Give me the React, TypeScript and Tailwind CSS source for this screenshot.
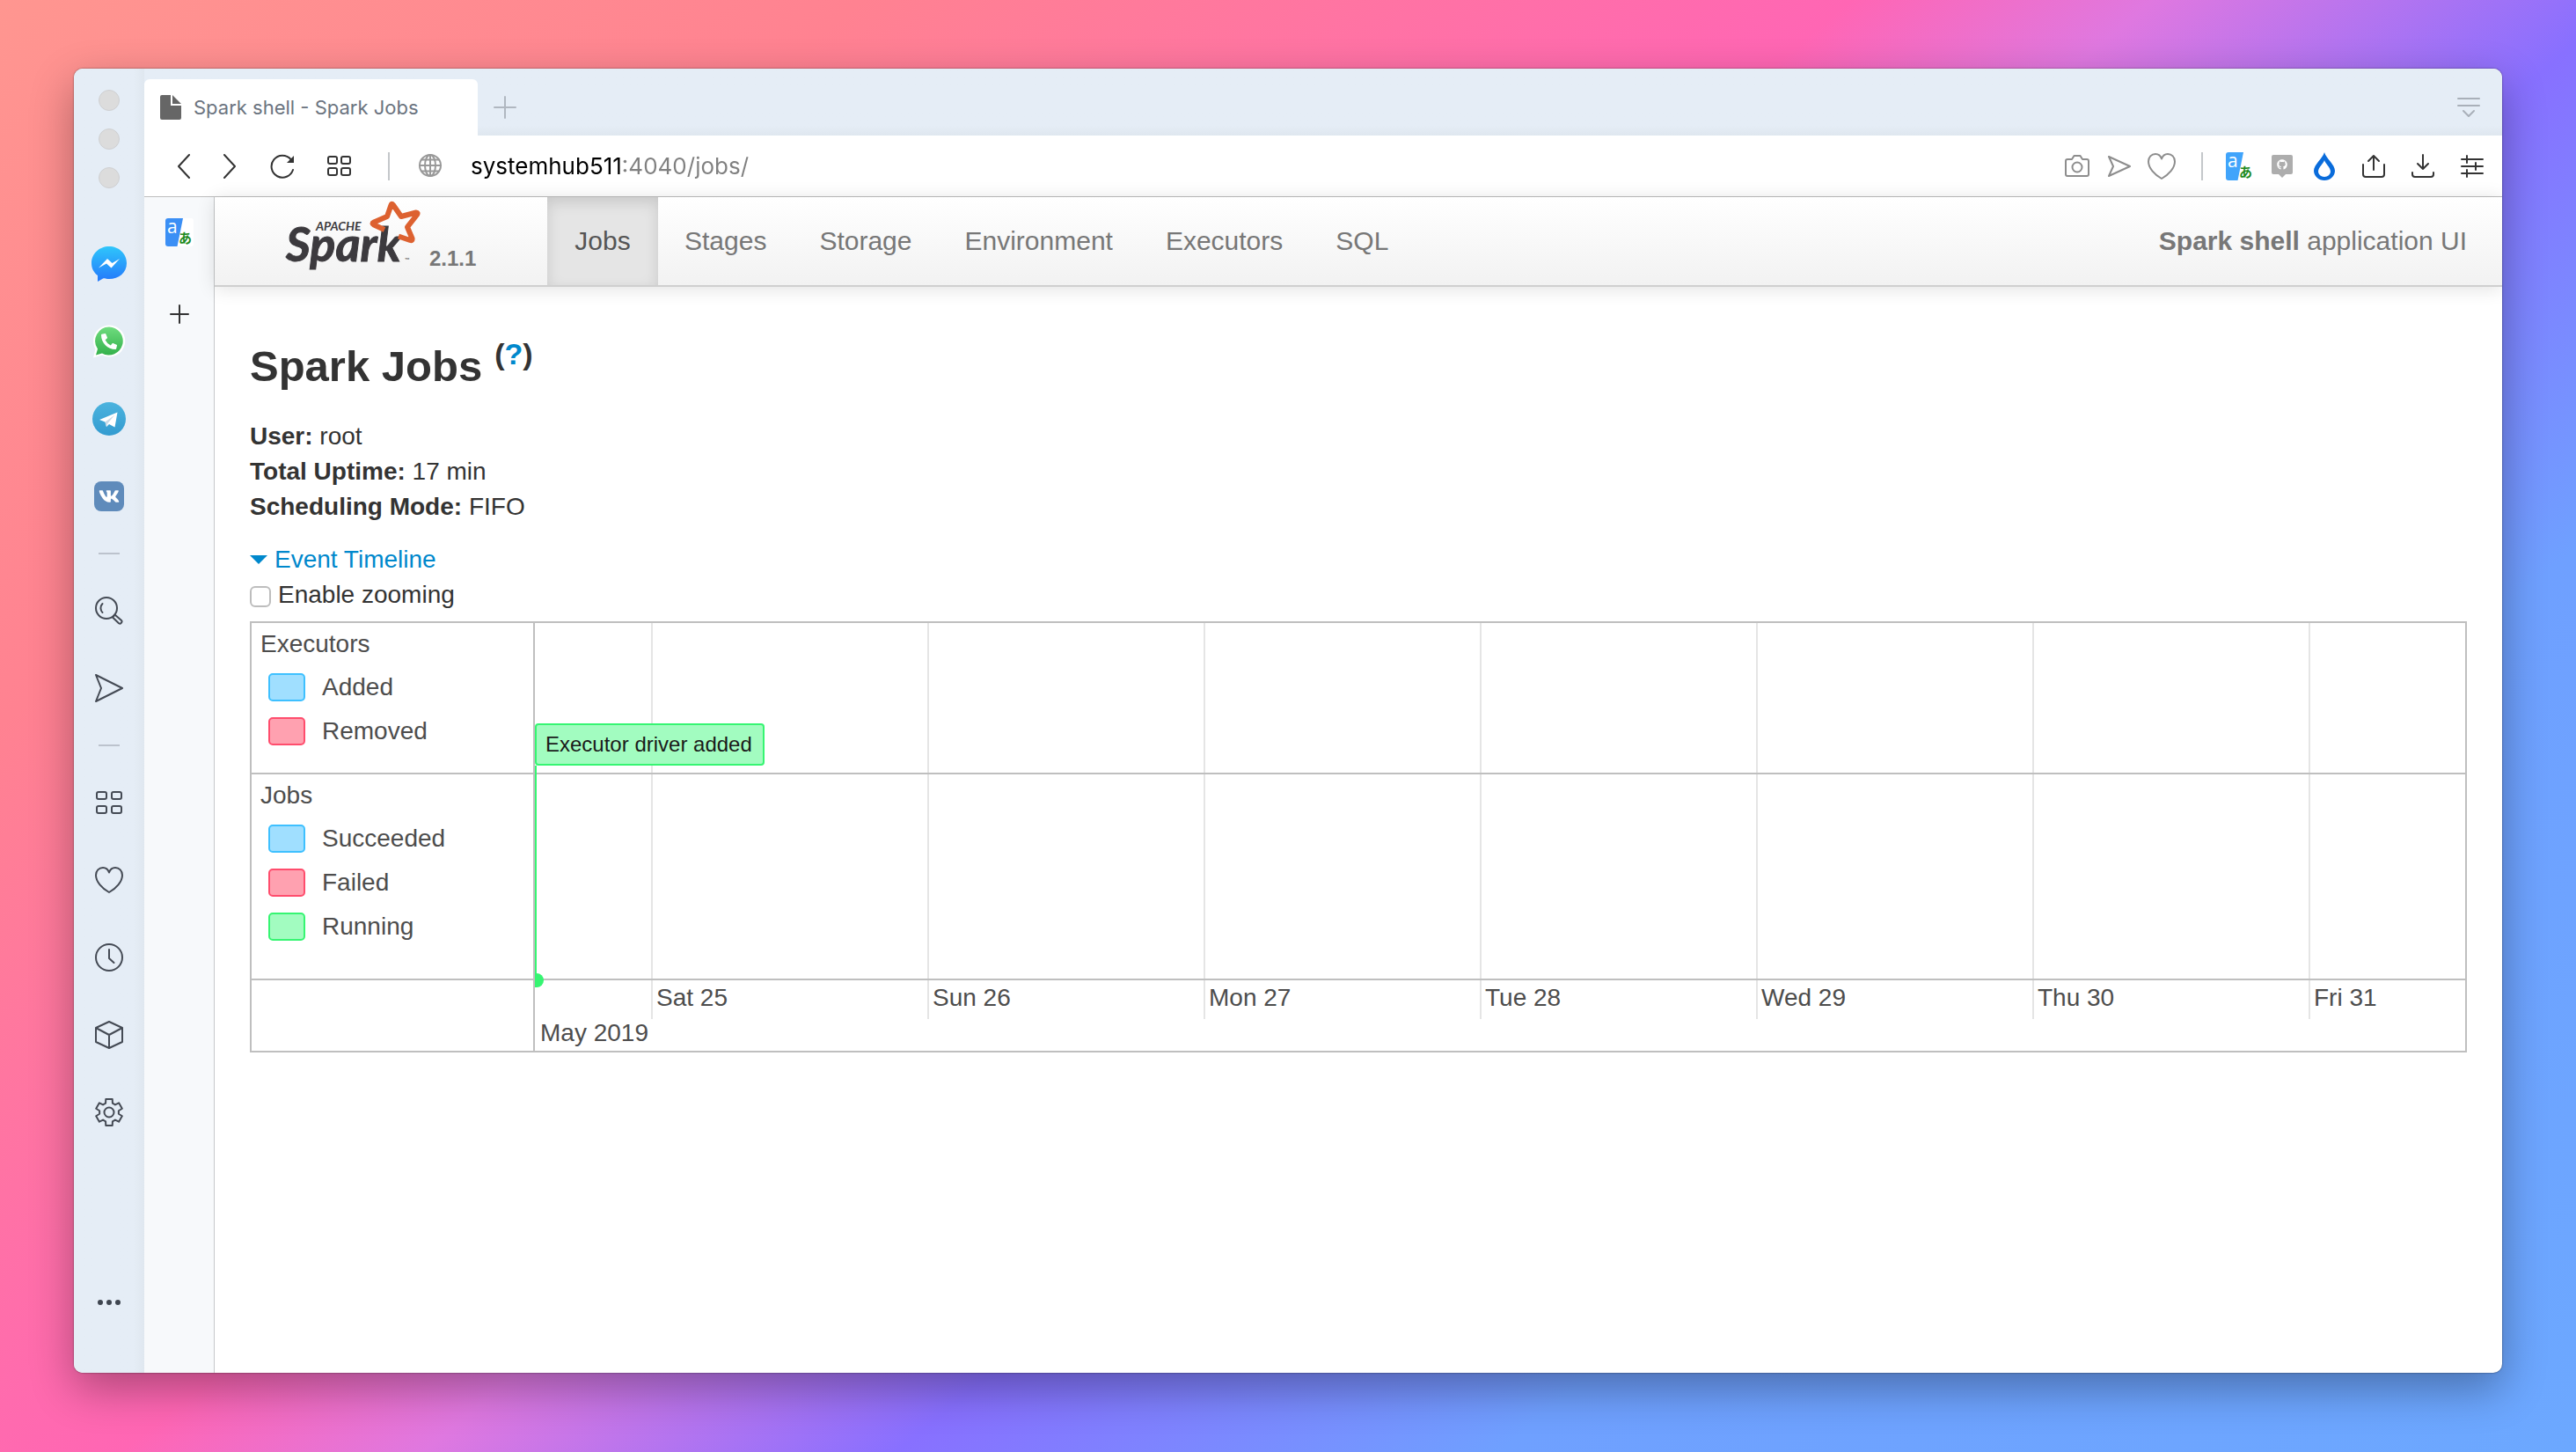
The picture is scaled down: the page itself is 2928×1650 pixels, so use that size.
import type { ReactNode } from "react";
import { FaVk, FaPhoneAlt, FaGithub } from "react-icons/fa";

/* ---------- icons ---------- */

function Stroke({ size, width = 2, children }: { size: number; width?: number; children: ReactNode }) {
  return (
    <svg
      width={size}
      height={size}
      viewBox={`0 0 ${size} ${size}`}
      fill="none"
      stroke="currentColor"
      strokeWidth={width}
      strokeLinecap="round"
      strokeLinejoin="round"
      aria-hidden="true"
    >
      {children}
    </svg>
  );
}

const heartPath =
  "M16 30 C8 25.500 1 18 1 10.500 C1 5.500 4.500 2 9 2 C12.500 2 15 4.500 16 7.500 C17 4.500 19.500 2 23 2 C27.500 2 31 5.500 31 10.500 C31 18 24 25.500 16 30 Z";

function gearPoints() {
  const pts: string[] = [];
  for (let k = 0; k < 6; k++) {
    const mid = -90 + k * 60;
    for (const [offset, r] of [[-21, 11], [-14, 15.4], [14, 15.4], [21, 11]]) {
      const a = ((mid + offset) * Math.PI) / 180;
      pts.push(`${(17 + r * Math.cos(a)).toFixed(2)},${(17 + r * Math.sin(a)).toFixed(2)}`);
    }
  }
  return pts.join(" ");
}

const Messenger = () => (
  <svg width="40" height="40" viewBox="0 0 40 40" aria-hidden="true">
    <defs>
      <linearGradient id="msg" x1="0" y1="0" x2="0" y2="1">
        <stop offset="0" stopColor="#2fc6fb" />
        <stop offset="1" stopColor="#2478fb" />
      </linearGradient>
    </defs>
    <path d="M20 0 C31 0 40 8 40 19 C40 30 31 37 20 37 C18 37 15.500 36.800 13.500 36.200 L7 40 L7 33 C2.500 29.500 0 25 0 19 C0 8 9 0 20 0 Z" fill="url(#msg)" />
    <path d="M8 24.500 L18 14 L23.500 19 L32 14 L22.500 24.500 L17 19.500 Z" fill="#fff" />
  </svg>
);

const WhatsApp = () => (
  <span className="relative block">
    <svg width="38" height="38" viewBox="0 0 38 38" aria-hidden="true">
      <defs>
        <linearGradient id="wa" x1="0" y1="0" x2="0" y2="1">
          <stop offset="0" stopColor="#6fdc7e" />
          <stop offset="1" stopColor="#34b14c" />
        </linearGradient>
      </defs>
      <path d="M19 0.500 A18 18 0 1 1 11 34.500 L1 37.500 L3.500 27.500 A18 18 0 0 1 19 0.500 Z" fill="#fff" />
      <path d="M19 2.500 A16 16 0 1 1 11 32.500 L4 34.500 L6 27.500 A16 16 0 0 1 19 2.500 Z" fill="url(#wa)" />
    </svg>
    <span className="absolute inset-0 flex items-center justify-center text-white">
      <FaPhoneAlt size={18} />
    </span>
  </span>
);

const Telegram = () => (
  <svg width="38" height="38" viewBox="0 0 38 38" aria-hidden="true">
    <defs>
      <linearGradient id="tg" x1="0" y1="0" x2="0" y2="1">
        <stop offset="0" stopColor="#4bb3de" />
        <stop offset="1" stopColor="#339bd0" />
      </linearGradient>
    </defs>
    <circle cx="19" cy="19" r="19" fill="url(#tg)" />
    <path d="M8 20 L28.500 11.500 L25.500 28.500 L19 25 L16 28 L14.500 22.500 Z" fill="#fff" />
    <path d="M14.500 22.500 L25.500 14.500 L17.500 24 L16 28 Z" fill="#c9d9e6" />
  </svg>
);

const Vk = () => (
  <span className="flex size-[34px] items-center justify-center rounded-lg bg-[#5f8bbb] text-white">
    <FaVk size={24} />
  </span>
);

const Search = () => (
  <Stroke size={32}>
    <circle cx="13" cy="13" r="12" />
    <path d="M8.500 8 C5.500 11 6 15.500 8.500 18" />
    <path d="M22.500 20.500 L30 27 C31 28 30.500 29 29.800 29.800 C29 30.800 28 31 27 30.200 L20 23.500 Z" />
  </Stroke>
);

const Send = () => (
  <Stroke size={32}>
    <path d="M1 1 L31 16 L1 31 L7 16 Z" />
  </Stroke>
);

const Grid = () => (
  <Stroke size={30}>
    <rect x="1" y="3" width="11" height="8" rx="2" />
    <rect x="18" y="3" width="11" height="8" rx="2" />
    <rect x="1" y="19" width="11" height="8" rx="2" />
    <rect x="18" y="19" width="11" height="8" rx="2" />
  </Stroke>
);

const Heart = () => (
  <Stroke size={32}>
    <path d={heartPath} />
  </Stroke>
);

const Clock = () => (
  <Stroke size={32}>
    <circle cx="16" cy="16" r="15" />
    <path d="M16 7 V17 L21.500 22" />
  </Stroke>
);

const Box = () => (
  <Stroke size={32}>
    <path d="M16 1 L31 8 V24 L16 31 L1 24 V8 Z M1 8 L16 16 L31 8 M16 16 V31" />
  </Stroke>
);

const Gear = () => (
  <Stroke size={34}>
    <polygon points={gearPoints()} />
    <circle cx="17" cy="17" r="5.5" />
  </Stroke>
);

function Translate({ blue }: { blue: string }) {
  return (
    <svg width="32" height="32" viewBox="0 0 32 32" className="overflow-visible" aria-hidden="true">
      <rect width="32" height="32" rx="3" fill="#fff" />
      <path d="M3 0 H20 L13.500 32 H3 A3 3 0 0 1 0 29 V3 A3 3 0 0 1 3 0 Z" fill={blue} />
      <text x="2" y="17" fontSize="21" fill="#fff" fontFamily="Open Sans, sans-serif">a</text>
      <text x="15" y="28" fontSize="15" fontWeight="700" fill="#1d8a1d" fontFamily="Noto Sans CJK JP, sans-serif">あ</text>
    </svg>
  );
}

const SparkLogo = () => (
  <svg width="156" height="96" viewBox="0 0 156 96" className="overflow-visible" role="img" aria-label="Apache Spark">
    <text x="1" y="73" fontSize="54" fontWeight="700" fontStyle="italic" fill="#3c3a3e" stroke="#3c3a3e" strokeWidth="1" fontFamily="Lato, sans-serif">
      Spark
    </text>
    <text x="35" y="38" fontSize="14" fontWeight="700" fontStyle="italic" fill="#3c3a3e" fontFamily="Lato, sans-serif">
      APACHE
    </text>
    <path
      d="M113 37 L101 31.500 Q98 30 101 28.500 L116 22 L120.500 9 Q121.500 6.500 123 9 L132 22 L149 17.500 Q151.500 17.500 150 20 L139 34 L144.500 47 Q145 50 142 49 L129 44.500"
      fill="none"
      stroke="#dd6130"
      strokeWidth="6"
      strokeLinejoin="round"
    />
    <text x="136" y="74" fontSize="7" fill="#777" fontFamily="Lato, sans-serif">™</text>
  </svg>
);

/* ---------- browser chrome ---------- */

function SideButton({ label, children }: { label: string; children: ReactNode }) {
  return (
    <button type="button" aria-label={label} className="flex h-[88px] w-full items-center justify-center">
      {children}
    </button>
  );
}

const SideRule = () => (
  <div className="flex h-[42px] items-center justify-center">
    <div className="h-0.5 w-6 bg-[#bcc3cd]" />
  </div>
);

function Sidebar() {
  return (
    <aside className="flex w-20 shrink-0 flex-col bg-linear-to-r from-[#e5edf6] from-85% to-[#dfe7ef] text-[#444a54]">
      <div className="flex h-[178px] flex-col items-center gap-5 pt-6">
        {["Close", "Minimise", "Zoom"].map((n) => (
          <button key={n} type="button" aria-label={n} className="size-6 rounded-full border border-[#cfd0d2] bg-[#dcdcdc]" />
        ))}
      </div>
      <SideButton label="Messenger"><Messenger /></SideButton>
      <SideButton label="WhatsApp"><WhatsApp /></SideButton>
      <SideButton label="Telegram"><Telegram /></SideButton>
      <SideButton label="VK"><Vk /></SideButton>
      <SideRule />
      <SideButton label="Search"><Search /></SideButton>
      <SideButton label="My Flow"><Send /></SideButton>
      <SideRule />
      <SideButton label="Speed Dial"><Grid /></SideButton>
      <SideButton label="Bookmarks"><Heart /></SideButton>
      <SideButton label="History"><Clock /></SideButton>
      <SideButton label="Extensions"><Box /></SideButton>
      <SideButton label="Settings"><Gear /></SideButton>
      <button type="button" aria-label="More" className="mt-auto mb-[68px] flex h-6 items-center justify-center gap-1">
        <span className="size-1.5 rounded-full bg-[#3f4650]" />
        <span className="size-1.5 rounded-full bg-[#3f4650]" />
        <span className="size-1.5 rounded-full bg-[#3f4650]" />
      </button>
    </aside>
  );
}

function TabBar() {
  return (
    <div className="flex h-[76px] items-end bg-linear-to-b from-[#e5edf6] from-85% to-[#dfe7ef]">
      <button type="button" className="flex h-16 w-[379px] items-center gap-3.5 rounded-t-md bg-white px-[18px] text-[22px] text-[#6b7480]">
        <svg width="24" height="28" viewBox="0 0 24 28" fill="#666" aria-hidden="true">
          <path d="M2 0 H12 V12 H24 V26 A2 2 0 0 1 22 28 H2 A2 2 0 0 1 0 26 V2 A2 2 0 0 1 2 0 Z M14 0 L24 10 H14 Z" />
        </svg>
        <span>Spark shell - Spark Jobs</span>
      </button>
      <button type="button" aria-label="New tab" className="flex h-16 w-[62px] items-center justify-center text-[#b0b7c0]">
        <Stroke size={26}><path d="M13 1 V25 M1 13 H25" /></Stroke>
      </button>
      <button type="button" aria-label="Tab menu" className="mr-4 ml-auto flex h-16 w-11 items-center justify-center text-[#a9b0b9]">
        <Stroke size={26}><path d="M1 3 H25 M1 11 H25 M7 17 L13 23 L19 17" /></Stroke>
      </button>
    </div>
  );
}

function ToolButton({ label, wide, children }: { label: string; wide?: boolean; children: ReactNode }) {
  return (
    <button type="button" aria-label={label} className={wide ? "flex h-12 w-14 items-center justify-center" : "flex h-12 w-12 items-center justify-center"}>
      {children}
    </button>
  );
}

function Toolbar() {
  return (
    <div className="flex h-[70px] items-center border-b border-[#bdbdbd] bg-white text-[#333]">
      <div className="flex items-center gap-1 pl-[21px]">
        <ToolButton label="Back"><Stroke size={28}><path d="M20 1 L8 14 L20 27" /></Stroke></ToolButton>
        <ToolButton label="Forward"><Stroke size={28}><path d="M8 1 L20 14 L8 27" /></Stroke></ToolButton>
        <span className="w-0" />
        <ToolButton label="Reload" wide>
          <Stroke size={28}>
            <path d="M26 18 A12.500 12.500 0 1 1 23.500 6" />
            <path d="M27 2 V10 H19 Z" fill="currentColor" strokeWidth="0" />
          </Stroke>
        </ToolButton>
        <span className="w-1" />
        <ToolButton label="Speed Dial">
          <Stroke size={28}>
            <rect x="2" y="3" width="10" height="8" rx="2" />
            <rect x="17" y="3" width="10" height="8" rx="2" />
            <rect x="2" y="16" width="10" height="8" rx="2" />
            <rect x="17" y="16" width="10" height="8" rx="2" />
          </Stroke>
        </ToolButton>
      </div>
      <div className="ml-8 h-8 w-0.5 bg-[#c4c7ca]" />
      <span className="ml-8 text-[#999]">
        <Stroke size={28}>
          <circle cx="14" cy="13" r="12" />
          <ellipse cx="14" cy="13" rx="6" ry="12" />
          <path d="M14 1 V25 M2 13 H26 M4 6.500 H24 M4 19.500 H24" />
        </Stroke>
      </span>
      <input
        aria-label="Address"
        defaultValue="systemhub511:4040/jobs/"
        className="ml-8 min-w-0 flex-1 bg-[linear-gradient(to_right,#000_174px,#808080_174px)] bg-clip-text text-[26px] text-transparent outline-none"
      />
      <div className="flex items-center text-[#8d8d8d]">
        <ToolButton label="Snapshot">
          <Stroke size={28}>
            <path d="M3 6 H8 L10.500 2 H17.500 L20 6 H25 Q27 6 27 8 V23 Q27 25 25 25 H3 Q1 25 1 23 V8 Q1 6 3 6 Z" />
            <circle cx="14" cy="15" r="5.5" />
          </Stroke>
        </ToolButton>
        <ToolButton label="Send to My Flow"><Stroke size={26}><path d="M1 2 L25 13 L1 24 L6 13 Z" /></Stroke></ToolButton>
        <ToolButton label="Bookmark"><Stroke size={32}><path d={heartPath} /></Stroke></ToolButton>
      </div>
      <div className="mr-[18px] ml-[21px] h-8 w-0.5 bg-[#c4c7ca]" />
      <div className="flex items-center">
        <ToolButton label="Translate"><Translate blue="#40a4fb" /></ToolButton>
        <ToolButton label="GitHub notifier">
          <span className="relative block">
            <svg width="24" height="28" viewBox="0 0 24 28" fill="#adadad" aria-hidden="true">
              <path d="M2 1 H22 Q24 1 24 3 V21 Q24 23 22 23 H16 L12 27 L8 23 H2 Q0 23 0 21 V3 Q0 1 2 1 Z" />
            </svg>
            <span className="absolute inset-x-0 top-1.5 flex justify-center text-white"><FaGithub size={12} /></span>
          </span>
        </ToolButton>
        <ToolButton label="Drop">
          <svg width="24" height="32" viewBox="0 0 24 32" aria-hidden="true">
            <path d="M12 0 C14 7 24 14 24 21 A12 11 0 0 1 0 21 C0 14 10 7 12 0 Z" fill="#0a6cdb" />
            <path d="M12 9 C13 13 19 17 19 22 A7 6 0 0 1 5 22 C5 17 11 13 12 9 Z" fill="#fff" />
          </svg>
        </ToolButton>
      </div>
      <div className="mr-1.5 ml-1 flex items-center text-[#333]">
        <ToolButton label="Share" wide>
          <Stroke size={28}><path d="M2 12 V23 Q2 26 5 26 H23 Q26 26 26 23 V12 M14 18 V2 M8 8 L14 2 L20 8" /></Stroke>
        </ToolButton>
        <ToolButton label="Downloads" wide>
          <Stroke size={28}><path d="M2 21 V23 Q2 26 5 26 H23 Q26 26 26 23 V21 M14 1 V17 M8 11 L14 17 L20 11" /></Stroke>
        </ToolButton>
        <ToolButton label="Easy setup" wide>
          <Stroke size={26}><path d="M1 5 H25 M1 13 H25 M1 21 H25 M7 1 V9 M17 9 V17 M7 17 V25" /></Stroke>
        </ToolButton>
      </div>
    </div>
  );
}

/* ---------- Spark page ---------- */

const links = ["Stages", "Storage", "Environment", "Executors", "SQL"];

function Navbar() {
  return (
    <nav className="flex h-[102px] items-stretch border-b-2 border-[#cfcfcf] bg-linear-to-b from-white to-[#f2f2f2] text-[30px] text-[#777] shadow-[0_2px_20px_rgba(0,0,0,0.12)]">
      <a href="#home" className="flex w-[378px] items-start gap-2 pl-20 text-2xl font-bold">
        <SparkLogo />
        <span className="pt-[54px]">2.1.1</span>
      </a>
      <a href="#jobs" className="flex min-w-[126px] items-center justify-center bg-[#e5e5e5] px-[30px] text-[#555] shadow-[inset_0_6px_16px_rgba(0,0,0,0.125)]">
        Jobs
      </a>
      {links.map((l) => (
        <a key={l} href={`#${l.toLowerCase()}`} className="flex items-center px-[30px]">{l}</a>
      ))}
      <p className="mr-10 ml-auto self-center">
        <strong>Spark shell</strong> application UI
      </p>
    </nav>
  );
}

const swatches = {
  blue: "border-[#3ec0ff] bg-[#a0dfff]",
  red: "border-[#ff4d6d] bg-[#ffa1b0]",
  green: "border-[#36f572] bg-[#a2fcc0]",
};

function Legend({ title, items }: { title: string; items: [keyof typeof swatches, string][] }) {
  return (
    <div className="w-[322px] shrink-0 border-r-2 border-[#bfbfbf] px-2.5 pt-1">
      <h4 className="h-10 leading-10">{title}</h4>
      <ul className="flex flex-col gap-2.5 pt-[9px]">
        {items.map(([tone, name]) => (
          <li key={name} className="flex h-10 items-center gap-[19px] pl-[9px] leading-10">
            <span className={`h-8 w-[42px] rounded-[5px] border-2 ${swatches[tone]}`} />
            {name}
          </li>
        ))}
      </ul>
    </div>
  );
}

const days = ["Sat 25", "Sun 26", "Mon 27", "Tue 28", "Wed 29", "Thu 30", "Fri 31"];

function DayColumns({ labels }: { labels?: boolean }) {
  return (
    <div className={`grid flex-1 grid-cols-[132fr_314fr_314fr_314fr_314fr_314fr_314fr_178fr] ${labels ? "h-11" : ""}`}>
      <div />
      {days.map((d) => (
        <div key={d} className="border-l-2 border-[#e5e5e5] pl-1 leading-10">{labels ? d : null}</div>
      ))}
    </div>
  );
}

function Timeline() {
  return (
    <div className="mt-2.5 border-2 border-[#bfbfbf] text-[#4d4d4d]">
      <div className="flex h-[172px] border-b-2 border-[#bfbfbf]">
        <Legend title="Executors" items={[["blue", "Added"], ["red", "Removed"]]} />
        <div className="relative flex flex-1">
          <DayColumns />
          <div className="absolute top-[114px] left-0 flex h-12 items-center rounded-[4px] border-2 border-[#36f572] bg-[#a2fcc0] pr-3 pl-2.5 text-2xl text-[#1a1a1a]">
            Executor driver added
          </div>
          <div className="absolute top-[162px] left-0 h-[244px] w-0.5 bg-[#36f572]" />
          <div className="absolute top-[398px] left-0 h-4 w-2.5 rounded-r-full bg-[#36f572]" />
        </div>
      </div>
      <div className="flex h-[234px] border-b-2 border-[#bfbfbf]">
        <Legend title="Jobs" items={[["blue", "Succeeded"], ["red", "Failed"], ["green", "Running"]]} />
        <DayColumns />
      </div>
      <div className="flex h-20">
        <div className="w-[322px] shrink-0 border-r-2 border-[#bfbfbf]" />
        <div className="flex-1">
          <DayColumns labels />
          <p className="-mt-1 pl-1.5 leading-10">May 2019</p>
        </div>
      </div>
    </div>
  );
}

function Page() {
  return (
    <main className="flex min-w-0 flex-1 flex-col font-['Liberation_Sans',Arial,sans-serif] text-[28px] leading-10 text-[#333]">
      <Navbar />
      <div className="px-10 pt-[50px] pb-10">
        <h1 className="mb-5 flex h-20 items-center text-[49px] font-bold">
          Spark Jobs
          <sup className="top-0 mb-7 ml-3.5 text-[34px]">
            (<a href="#help" className="text-[#0088cc]">?</a>)
          </sup>
        </h1>
        <ul className="mb-5">
          <li><strong>User:</strong> root</li>
          <li><strong>Total Uptime:</strong> 17 min</li>
          <li><strong>Scheduling Mode:</strong> FIFO</li>
        </ul>
        <a href="#timeline" className="flex items-center gap-2 text-[#0088cc]">
          <svg width="20" height="10" viewBox="0 0 20 10" fill="currentColor" aria-hidden="true"><path d="M0 0 H20 L10 10 Z" /></svg>
          Event Timeline
        </a>
        <label className="flex items-center gap-2">
          <input type="checkbox" className="mt-1 size-6 appearance-none rounded-md border-2 border-[#bdbdbd] bg-white" />
          Enable zooming
        </label>
        <Timeline />
      </div>
    </main>
  );
}

export default function App() {
  return (
    <div className="flex min-h-screen bg-[linear-gradient(140deg,#ff9690_0%,#ff8291_20%,#ff66b4_43%,#df78e0_50%,#8870ff_61%,#6fa0ff_75%,#6ca8ff_100%)] px-[84px] pt-[78px] pb-[90px] font-[Inter,sans-serif]">
      <div className="flex flex-1 overflow-hidden rounded-[10px] bg-white shadow-[0_0_2px_rgba(0,0,0,0.6),0_18px_50px_rgba(0,0,0,0.32)]">
        <Sidebar />
        <div className="flex min-w-0 flex-1 flex-col">
          <TabBar />
          <Toolbar />
          <div className="flex flex-1">
            <aside className="flex w-20 shrink-0 flex-col items-center border-r border-[#c6c8ca] bg-[#f7f9fb] text-[#333]">
              <button type="button" aria-label="Translate" className="mt-6"><Translate blue="#3b8ff5" /></button>
              <button type="button" aria-label="Add" className="mt-[66px]">
                <Stroke size={22}><path d="M11 1 V21 M1 11 H21" /></Stroke>
              </button>
            </aside>
            <Page />
          </div>
        </div>
      </div>
    </div>
  );
}
